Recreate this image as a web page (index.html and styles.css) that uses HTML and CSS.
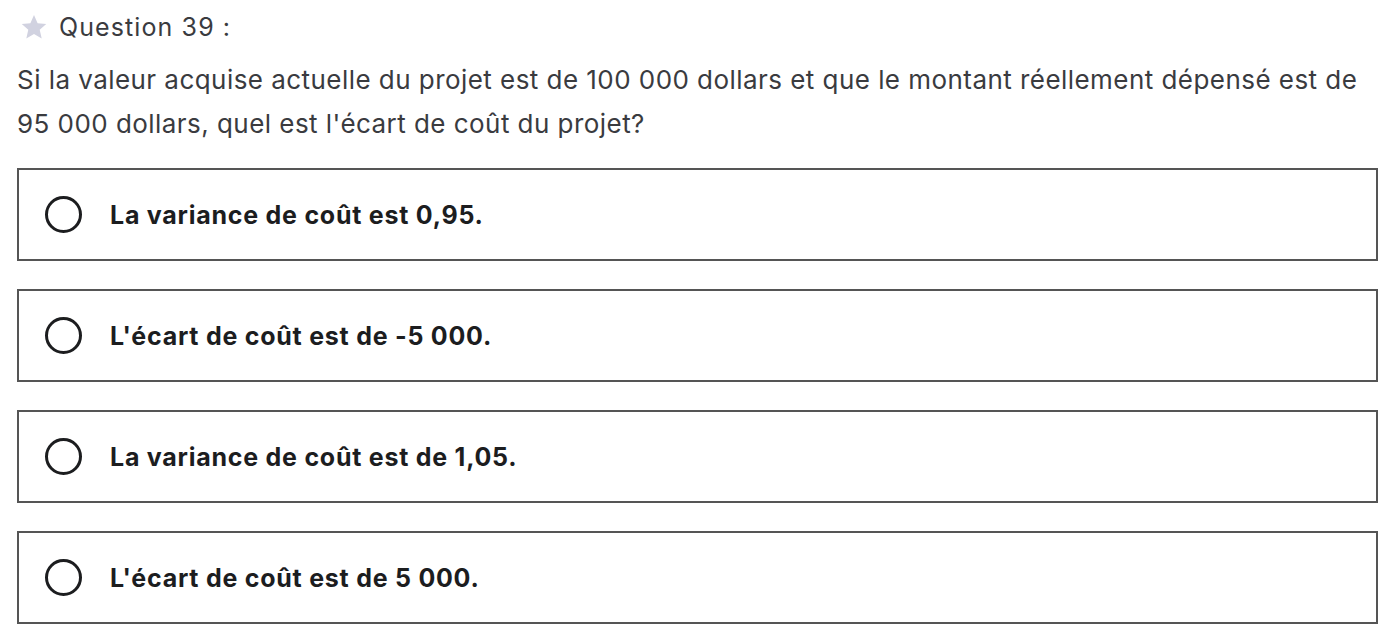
FILE: index.html
```html
<!DOCTYPE html>
<html lang="fr">
<head>
<meta charset="utf-8">
<link rel="stylesheet" href="styles.css">
</head>
<body>
<div class="page">
  <div class="qhead">
    <svg class="star" width="28" height="28" viewBox="0 0 24 24"><path d="M12 1.8l3.1 6.9 7.4.7-5.6 5 1.7 7.4L12 18l-6.6 3.8 1.7-7.4-5.6-5 7.4-.7z" fill="#d1d2e0"/></svg>
    <span class="qlabel">Question 39 :</span>
  </div>
  <p class="qtext">Si la valeur acquise actuelle du projet est de 100 000 dollars et que le montant réellement dépensé est de 95 000 dollars, quel est l'écart de coût du projet?</p>
  <div class="answers">
    <label class="answer"><span class="radio"></span><span class="atext">La variance de coût est 0,95.</span></label>
    <label class="answer"><span class="radio"></span><span class="atext">L'écart de coût est de -5 000.</span></label>
    <label class="answer"><span class="radio"></span><span class="atext">La variance de coût est de 1,05.</span></label>
    <label class="answer"><span class="radio"></span><span class="atext">L'écart de coût est de 5 000.</span></label>
  </div>
</div>
</body>
</html>
```
FILE: styles.css
```css
html, body {
  margin: 0;
  padding: 0;
  background: #ffffff;
}
.page {
  padding: 12px 15px 0 17px;
  font-family: "Inter", "Liberation Sans", sans-serif;
  color: #2d2f31;
}
.qhead {
  display: flex;
  align-items: center;
  gap: 11px;
  padding-left: 3px;
  height: 30px;
}
.star { flex: none; }
.qlabel {
  font-size: 25px;
  letter-spacing: 1.1px;
  color: #3a3b3f;
}
.qtext {
  margin: 16px 0 0 0;
  font-size: 26px;
  letter-spacing: 0.45px;
  line-height: 44px;
  width: 1362px;
  color: #3a3b3f;
}
.answers {
  margin-top: 22px;
  display: flex;
  flex-direction: column;
  gap: 28px;
}
.answer {
  display: flex;
  align-items: center;
  height: 93px;
  box-sizing: border-box;
  border: 2px solid #555555;
  width: 1361px;
  padding-left: 26px;
}
.radio {
  width: 37px;
  height: 37px;
  box-sizing: border-box;
  border: 3px solid #1c1d1f;
  border-radius: 50%;
  flex: none;
}
.atext {
  margin-left: 28px;
  font-size: 25px;
  letter-spacing: 0.75px;
  font-weight: 700;
  color: #1c1d1f;
}
```
